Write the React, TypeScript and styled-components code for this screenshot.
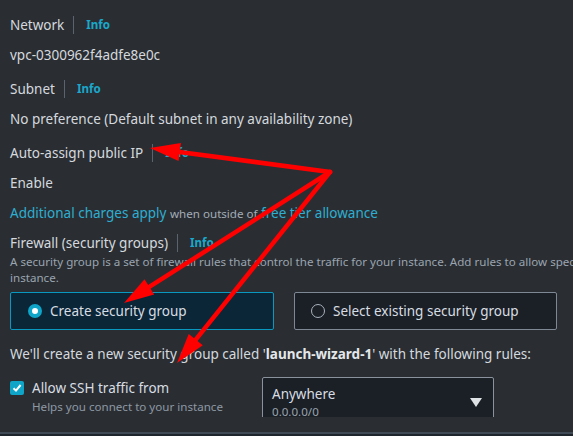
import React from "react";
import styled, { createGlobalStyle } from "styled-components";

const GlobalStyle = createGlobalStyle`
   html, body {
      margin: 0;
      padding: 0;
      background: #2a2e33;
      overflow: hidden;
   }
   body {
      font-family: "Noto Sans", "Open Sans", sans-serif;
      color: #d5d9de;
   }
`;

type Pt = [number, number];

const ORIGIN: Pt = [330, 172];
const TARGETS: Pt[] = [
   [150, 148],
   [124, 303],
   [177, 363],
];

function arrowHead(from: Pt, to: Pt, len = 30, half = 9): string {
   const dx = to[0] - from[0];
   const dy = to[1] - from[1];
   const d = Math.sqrt(dx * dx + dy * dy);
   const ux = dx / d;
   const uy = dy / d;
   const bx = to[0] - ux * len;
   const by = to[1] - uy * len;
   const px = -uy * half;
   const py = ux * half;
   return `${to[0]},${to[1]} ${bx + px},${by + py} ${bx - px},${by - py}`;
}

function FieldLabel({ children }: { children: React.ReactNode }) {
   return (
      <LabelRow>
         <span>{children}</span>
         <Divider />
         <InfoLink>Info</InfoLink>
      </LabelRow>
   );
}

function App() {
   return (
      <>
         <GlobalStyle />
         <Page>
            <Field>
               <FieldLabel>Network</FieldLabel>
               <Value>vpc-0300962f4adfe8e0c</Value>
            </Field>
            <Field>
               <FieldLabel>Subnet</FieldLabel>
               <Value>No preference (Default subnet in any availability zone)</Value>
            </Field>
            <Field>
               <FieldLabel>Auto-assign public IP</FieldLabel>
               <Value>Enable</Value>
               <Value>
                  <TextLink>Additional charges apply</TextLink> <SmallNote>when outside of</SmallNote>{" "}
                  <TextLink>free tier allowance</TextLink>
               </Value>
            </Field>
            <FirewallField>
               <FieldLabel>Firewall (security groups)</FieldLabel>
               <Description>
                  A security group is a set of firewall rules that control the traffic for your instance. Add rules to allow
                  specific traffic to reach your
                  <br />
                  instance.
               </Description>
               <Cards>
                  <OptionCard selected>
                     <Radio selected />
                     <span>Create security group</span>
                  </OptionCard>
                  <OptionCard>
                     <Radio />
                     <span>Select existing security group</span>
                  </OptionCard>
               </Cards>
               <Notice>
                  We'll create a new security group called '<b>launch-wizard-1</b>' with the following rules:
               </Notice>
               <RuleRow>
                  <CheckWrap>
                     <Checkbox>
                        <svg width="10" height="10" viewBox="0 0 10 10">
                           <path d="M1.5 5.2 L4 7.6 L8.6 2" fill="none" stroke="#fff" strokeWidth="2" />
                        </svg>
                     </Checkbox>
                     <div>
                        <RuleTitle>Allow SSH traffic from</RuleTitle>
                        <RuleHint>Helps you connect to your instance</RuleHint>
                     </div>
                  </CheckWrap>
                  <SelectBox>
                     <div>
                        <SelectValue>Anywhere</SelectValue>
                        <SelectSub>0.0.0.0/0</SelectSub>
                     </div>
                     <Caret />
                  </SelectBox>
               </RuleRow>
            </FirewallField>
         </Page>
         <Footer />
         <Annotations width="573" height="436" viewBox="0 0 573 436">
            {TARGETS.map((t, i) => {
               const dx = t[0] - ORIGIN[0];
               const dy = t[1] - ORIGIN[1];
               const d = Math.sqrt(dx * dx + dy * dy);
               const endX = t[0] - (dx / d) * 22;
               const endY = t[1] - (dy / d) * 22;
               return (
                  <g key={i}>
                     <line x1={ORIGIN[0]} y1={ORIGIN[1]} x2={endX} y2={endY} stroke="#ff0000" strokeWidth="4.5" strokeLinecap="round" />
                     <polygon points={arrowHead(ORIGIN, t)} fill="#ff0000" />
                  </g>
               );
            })}
         </Annotations>
      </>
   );
}

export default App;

const Page = styled.div`
   width: 760px;
   padding: 15px 0 0 10px;
   height: 417px;
   box-sizing: border-box;
   display: flex;
   flex-direction: column;
   gap: 14px;
   font-size: 13.5px;
   line-height: 20px;
`;

const Field = styled.div`
   display: flex;
   flex-direction: column;
   gap: 10px;
`;

const FirewallField = styled.div`
   display: flex;
   flex-direction: column;
   margin-top: -5px;
`;

const LabelRow = styled.div`
   display: flex;
   align-items: center;
   height: 20px;
`;

const Divider = styled.span`
   width: 1px;
   height: 18px;
   background: #5a6470;
   margin: 0 12px 0 9px;
`;

const InfoLink = styled.span`
   color: #1aa9cb;
   font-weight: 700;
   font-size: 11.6px;
`;

const Value = styled.div`
   color: #d5d9de;
`;

const TextLink = styled.span`
   color: #2eaed1;
`;

const SmallNote = styled.span`
   font-size: 11.6px;
   color: #a3acb6;
`;

const Description = styled.div`
   font-size: 11.6px;
   line-height: 16px;
   color: #9aa4af;
   margin-top: 1px;
   white-space: nowrap;
`;

const Cards = styled.div`
   display: grid;
   grid-template-columns: 264px 263px;
   gap: 20px;
   margin-top: 6px;
`;

const OptionCard = styled.div<{ selected?: boolean }>`
   display: flex;
   align-items: center;
   gap: 8px;
   height: 38px;
   box-sizing: border-box;
   padding-left: ${(p) => (p.selected ? "17px" : "16px")};
   border: 1px solid ${(p) => (p.selected ? "#0898c0" : "#7d8894")};
   border-radius: 2px;
   background: ${(p) => (p.selected ? "#0b2637" : "#1b2027")};
   color: #d8dde2;
`;

const Radio = styled.span<{ selected?: boolean }>`
   width: 14px;
   height: 14px;
   border-radius: 50%;
   box-sizing: border-box;
   flex-shrink: 0;
   ${(p) =>
      p.selected
         ? `background: #fff; border: 4px solid #0ea5c9;`
         : `background: transparent; border: 1.5px solid #aab2bb;`}
`;

const Notice = styled.div`
   margin-top: 14px;
   color: #d5d9de;

   b {
      font-weight: 700;
      color: #e3e7ea;
   }
`;

const RuleRow = styled.div`
   display: flex;
   align-items: flex-start;
   margin-top: 13px;
`;

const CheckWrap = styled.div`
   display: flex;
   align-items: flex-start;
   gap: 8px;
   width: 252px;
   padding-top: 1px;
`;

const Checkbox = styled.span`
   width: 14px;
   height: 14px;
   margin-top: 3px;
   border-radius: 2px;
   background: #0ea5c9;
   display: flex;
   align-items: center;
   justify-content: center;
   flex-shrink: 0;
`;

const RuleTitle = styled.div`
   color: #d8dde2;
`;

const RuleHint = styled.div`
   font-size: 11.6px;
   line-height: 16px;
   color: #8e98a3;
   margin-top: 1px;
`;

const SelectBox = styled.div`
   width: 232px;
   height: 48px;
   box-sizing: border-box;
   border: 1px solid #8a939d;
   border-radius: 2px;
   background: #1b2027;
   display: flex;
   align-items: center;
   justify-content: space-between;
   padding: 0 11px 0 9px;
`;

const SelectValue = styled.div`
   color: #d8dde2;
`;

const SelectSub = styled.div`
   font-size: 11.6px;
   line-height: 15px;
   color: #9aa3ad;
`;

const Caret = styled.span`
   width: 0;
   height: 0;
   border-left: 6px solid transparent;
   border-right: 6px solid transparent;
   border-top: 9px solid #dfe3e6;
   margin-top: 2px;
`;

const Footer = styled.div`
   position: absolute;
   left: 0;
   right: 0;
   top: 432px;
   height: 4px;
   border-top: 2px solid #3f4a56;
   background: #1e252c;
`;

const Annotations = styled.svg`
   position: absolute;
   left: 0;
   top: 0;
   pointer-events: none;
`;
